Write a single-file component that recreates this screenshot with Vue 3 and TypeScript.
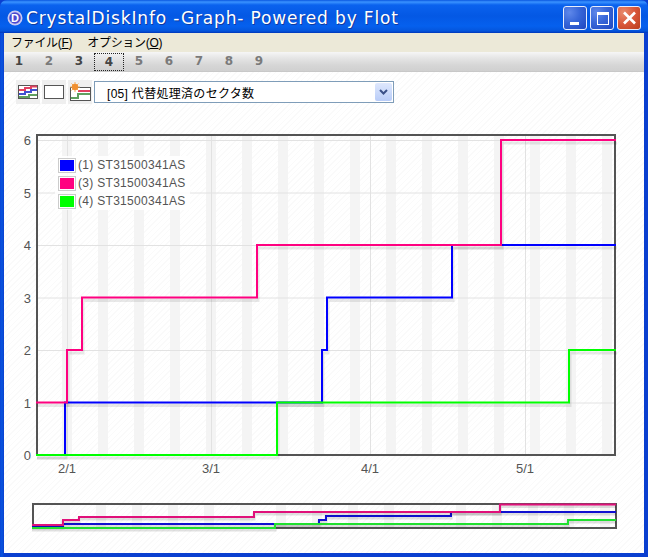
<script setup lang="ts">
interface Series { color: string; mini: string; main: string; line: string; name: string }
const series: Series[] = [
  { color: '#0000ff', line: '#1010d0', name: '(1) ST31500341AS', main: '36,455 65,455 65,402.5 322,402.5 322,350 327,350 327,297.5 452,297.5 452,245 616,245', mini: '32,526 63,526 63,524 319,524 319,520 326,520 326,516 451,516 451,512 616,512' },
  { color: '#ff0080', line: '#e0107a', name: '(3) ST31500341AS', main: '36,402.5 67,402.5 67,350 82,350 82,297.5 257,297.5 257,245 501,245 501,140 616,140', mini: '32,525 63,525 63,520 79,520 79,517 254,517 254,512 500,512 500,504.5 616,504.5' },
  { color: '#00ff00', line: '#20e030', name: '(4) ST31500341AS', main: '36,455 277,455 277,402.5 569,402.5 569,350 616,350', mini: '32,528 275,528 275,524 568,524 568,520 616,520' },
]
const bands = Array.from({ length: 16 }, (_, i) => 62 + 36 * i)
const yTicks = [0, 1, 2, 3, 4, 5, 6].map((v) => ({ v, y: 455 - v * 52.5 }))
const xTicks = [
  { label: '2/1', x: 67 },
  { label: '3/1', x: 211 },
  { label: '4/1', x: 370 },
  { label: '5/1', x: 525 },
]
const tabs = [1, 2, 3, 4, 5, 6, 7, 8, 9]
const darkTabs = [1, 3, 4]
</script>

<template>
  <div class="window">
    <header class="titlebar">
      <svg class="appicon" width="16" height="16" viewBox="0 0 16 16">
        <circle cx="8" cy="8" r="7.5" fill="#c9c9f2" />
        <circle cx="8" cy="8" r="5.8" fill="#4a4ad0" />
        <text x="8" y="12" text-anchor="middle" class="appicon-text">D</text>
      </svg>
      <span class="title">CrystalDiskInfo -Graph- Powered by Flot</span>
      <div class="controls">
        <button class="ctl">
          <svg width="21" height="21" viewBox="0 0 21 21"><rect x="5" y="14" width="9" height="3" fill="#fff" /></svg>
        </button>
        <button class="ctl">
          <svg width="21" height="21" viewBox="0 0 21 21"><path d="M5 4h12v13H5z M6 7v9h10V7z" fill="#fff" fill-rule="evenodd" /></svg>
        </button>
        <button class="ctl close">
          <svg width="21" height="21" viewBox="0 0 21 21"><path d="M5 4.5l11 11M16 4.5l-11 11" stroke="#fff" stroke-width="2.6" /></svg>
        </button>
      </div>
    </header>
    <div class="client">
      <nav class="menubar">
        <span>ファイル(<u>F</u>)</span>
        <span>オプション(<u>O</u>)</span>
      </nav>
      <div class="tabs">
        <span v-for="t in tabs" :key="t" class="tab" :class="{ dark: darkTabs.includes(t), active: t === 4 }">{{ t }}</span>
      </div>
      <div class="content">
        <div class="toolbar">
          <button class="tool">
            <svg width="20" height="14" viewBox="0 0 20 14">
              <rect x=".5" y=".5" width="19" height="13" fill="#fff" stroke="#555" />
              <path d="M1 5h6V3h6V1.500h6" fill="none" stroke="#e04060" stroke-width="2" />
              <path d="M1 9h6V7h6V5h6" fill="none" stroke="#4050d0" stroke-width="2" />
              <path d="M1 12h10v-2h8" fill="none" stroke="#60a060" stroke-width="2" />
            </svg>
          </button>
          <button class="tool">
            <svg width="20" height="14" viewBox="0 0 20 14"><rect x=".5" y=".5" width="19" height="13" fill="#fff" stroke="#555" /></svg>
          </button>
          <button class="tool">
            <svg width="22" height="20" viewBox="0 0 22 20">
              <rect x="1.500" y="5.500" width="20" height="13" fill="#fff" stroke="#555" />
              <path d="M2 16h7v-4h12" fill="none" stroke="#60a060" stroke-width="2" />
              <path d="M9 9h12" fill="none" stroke="#e04060" stroke-width="2" />
              <path d="M6 0v10M1 5h10M2.500 1.500l7 7M9.500 1.500l-7 7" stroke="#f5b060" stroke-width="1" />
              <circle cx="6" cy="5" r="3.200" fill="#f09030" />
            </svg>
          </button>
          <div class="select">
            <span class="select-text">[05] 代替処理済のセクタ数</span>
            <span class="select-btn">
              <svg width="9" height="7" viewBox="0 0 9 7"><path d="M1 1l3.500 3.500L8 1" fill="none" stroke="#3a5088" stroke-width="2" /></svg>
            </span>
          </div>
        </div>
        <div class="graph">
          <svg class="plot" width="640" height="481" viewBox="0 0 640 481">
            <g transform="translate(-4,-72)">
              <rect v-for="b in bands" :key="b" :x="b" y="136" width="10" height="318" fill="#f4f4f4" />
              <line v-for="t in yTicks" :key="t.v" x1="37" x2="615" :y1="t.y + .5" :y2="t.y + .5" stroke="#e2e2e2" />
              <line v-for="t in xTicks" :key="t.x" :x1="t.x + .5" :x2="t.x + .5" y1="136" y2="454" stroke="#e2e2e2" />
              <rect x="37" y="135" width="578" height="320" fill="none" stroke="#545454" stroke-width="2" />
              <text v-for="t in yTicks" :key="'y' + t.v" x="31" :y="t.y + 5" text-anchor="end" class="tick">{{ t.v }}</text>
              <text v-for="t in xTicks" :key="'x' + t.x" :x="t.x" y="473" text-anchor="middle" class="tick">{{ t.label }}</text>
              <g v-for="s in series" :key="s.color">
                <polyline :points="s.main" fill="none" stroke="#000" stroke-opacity=".09" stroke-width="3" transform="translate(1,3)" />
                <polyline :points="s.main" fill="none" :stroke="s.color" stroke-width="2" />
              </g>
              <rect v-for="b in bands" :key="'m' + b" :x="b - 2" y="505" width="10" height="23" fill="#f4f4f4" />
              <rect x="33" y="504" width="583" height="24" fill="none" stroke="#545454" stroke-width="2" />
              <g v-for="s in series" :key="'mini' + s.color">
                <polyline :points="s.mini" fill="none" stroke="#000" stroke-opacity=".12" stroke-width="3" transform="translate(0,2)" />
                <polyline :points="s.mini" fill="none" :stroke="s.line" stroke-width="2" />
              </g>
            </g>
          </svg>
          <ul class="legend">
            <li v-for="s in series" :key="s.name">
              <span class="swatch"><i :style="{ background: s.color }"></i></span>
              <span>{{ s.name }}</span>
            </li>
          </ul>
        </div>
      </div>
    </div>
  </div>
</template>

<style>
html, body { margin: 0; padding: 0; background: #0a3fd0; }
</style>

<style scoped>
.window {
  width: 648px;
  height: 557px;
  box-sizing: border-box;
  display: flex;
  flex-direction: column;
  border-radius: 7px 7px 0 0;
  background: linear-gradient(90deg, #0a45d8 0, #0855dd 2px, #0a3fd0 4px);
  overflow: hidden;
  font-family: "Liberation Sans", "Noto Sans CJK JP", sans-serif;
}
.titlebar {
  flex: none;
  height: 33px;
  box-sizing: border-box;
  padding: 3px 7px 0 7px;
  display: flex;
  align-items: center;
  gap: 1px;
  background: linear-gradient(180deg, #0a57e0 0, #3a93ff 2px, #0a62ee 5px, #0458e4 16px, #0560ee 26px, #0455dc 31px, #0036b8 33px);
}
.appicon { flex: none; }
.appicon-text { font: bold 11px "Liberation Sans", sans-serif; fill: #fff; }
.title {
  flex: 1;
  color: #fff;
  font-family: "DejaVu Sans", sans-serif;
  font-size: 17px;
  letter-spacing: 0.85px;
  white-space: nowrap;
  text-shadow: 1px 1px 0 #0f3aa0;
  padding-left: 2px;
}
.controls { display: flex; gap: 3px; }
.ctl {
  width: 24px;
  height: 24px;
  padding: 0;
  display: flex;
  align-items: center;
  justify-content: center;
  border: 1px solid #e8eefc;
  border-radius: 3px;
  background: radial-gradient(circle at 25% 25%, #5f88ea 0, #3766d8 45%, #1f47c0 100%);
}
.ctl.close { background: radial-gradient(circle at 25% 25%, #e88a6c 0, #d9573a 50%, #b93c1c 100%); }
.client {
  flex: 1;
  margin: 0 4px 4px 4px;
  display: flex;
  flex-direction: column;
  min-height: 0;
}
.menubar {
  flex: none;
  height: 19px;
  background: #ece9d8;
  display: flex;
  gap: 15px;
  padding-left: 7px;
  font-size: 12px;
  letter-spacing: -0.3px;
  line-height: 20px;
  color: #000;
}
.tabs {
  flex: none;
  height: 20px;
  display: flex;
  box-sizing: border-box;
  padding: 1px 0 0 0;
  background: linear-gradient(180deg, #f6f6f6 0, #e6e6e6 30%, #d6d6d6 70%, #d0d0d0 100%);
  border-bottom: 1px solid #c8c8c8;
}
.tab {
  width: 30px;
  height: 18px;
  box-sizing: border-box;
  text-align: center;
  font: bold 12px/16px "DejaVu Sans", sans-serif;
  color: #7a7a7a;
}
.tab.dark { color: #444; }
.tab.active { border: 1px dotted #222; }
.content {
  flex: 1;
  min-height: 0;
  position: relative;
  background-color: #fff;
  background-image: repeating-linear-gradient(135deg, #fafafa 0, #fafafa 1px, #ffffff 1px, #ffffff 4px);
}
.toolbar {
  position: relative;
  z-index: 1;
  display: flex;
  align-items: flex-start;
  gap: 2px;
  padding: 8px 0 0 12px;
  height: 22px;
}
.tool {
  width: 24px;
  height: 24px;
  padding: 0;
  border: 0;
  display: flex;
  align-items: center;
  justify-content: center;
  background: #efefef;
}
.select {
  width: 300px;
  height: 22px;
  margin-top: 1px;
  box-sizing: border-box;
  border: 1px solid #7f9db9;
  background: #fff;
  display: flex;
  align-items: center;
  justify-content: space-between;
  font-size: 12px;
  letter-spacing: 0.3px;
  color: #000;
}
.select-text { padding-left: 12px; }
.select-btn {
  width: 17px;
  height: 18px;
  margin-right: 1px;
  display: flex;
  align-items: center;
  justify-content: center;
  border-radius: 2px;
  background: linear-gradient(180deg, #dfe8fd, #b8ccf8);
}
.graph { position: absolute; inset: 0; }
.plot { display: block; }
.tick { font: 13px "Liberation Sans", sans-serif; fill: #545454; }
.legend {
  position: absolute;
  left: 51px;
  top: 84px;
  margin: 0;
  padding: 0 4px 0 3px;
  list-style: none;
  background: rgba(255, 255, 255, .85);
  font-size: 12px;
  letter-spacing: 0.3px;
  color: #545454;
}
.legend li { display: flex; align-items: center; gap: 2px; height: 18px; }
.swatch {
  width: 18px;
  height: 15px;
  box-sizing: border-box;
  border: 1px solid #ccc;
  padding: 1px;
  display: block;
}
.swatch i { display: block; width: 100%; height: 100%; }
</style>
